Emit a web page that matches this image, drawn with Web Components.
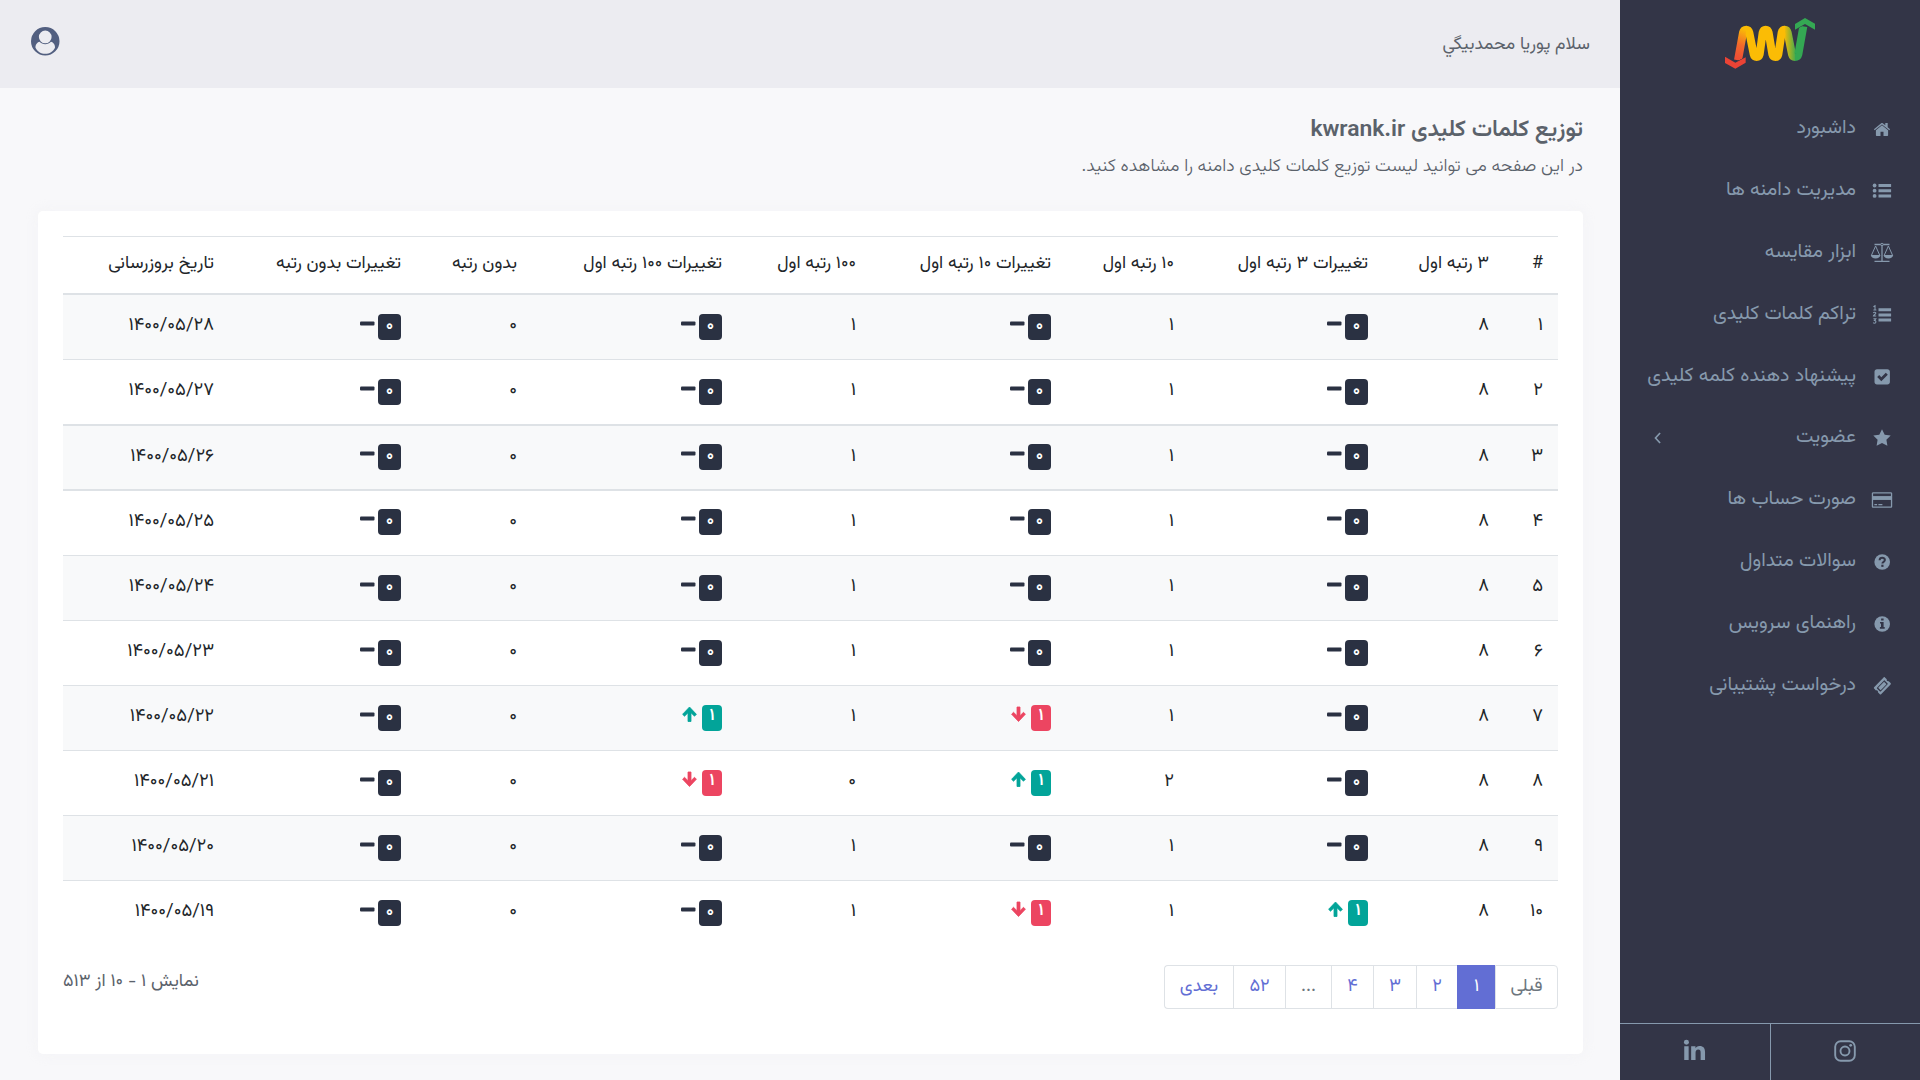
<!DOCTYPE html>
<html lang="fa" dir="rtl">
<head>
  <meta charset="utf-8">
  <title>kwrank.ir</title>
  <style>
    body {
      margin: 0;
      background: #f8f8fa;
      color: #5b626b;
      font-family: Vazirmatn, "Noto Sans Arabic", "DejaVu Sans", sans-serif;
      font-size: 16px;
      overflow: hidden;
    }
  </style>
</head>
<body>
  <rank-app>
    <side-bar slot="sidebar">
      <side-item icon="home">داشبورد</side-item>
      <side-item icon="list">مدیریت دامنه ها</side-item>
      <side-item icon="scale">ابزار مقایسه</side-item>
      <side-item icon="listOl">تراکم کلمات کلیدی</side-item>
      <side-item icon="check">پیشنهاد دهنده کلمه کلیدی</side-item>
      <side-item icon="star" expandable>عضویت</side-item>
      <side-item icon="card">صورت حساب ها</side-item>
      <side-item icon="question">سوالات متداول</side-item>
      <side-item icon="info">راهنمای سرویس</side-item>
      <side-item icon="ticket">درخواست پشتیبانی</side-item>
    </side-bar>
    <top-bar slot="header">سلام پوریا محمدبیگي</top-bar>
    <page-title>
      توزیع کلمات کلیدی kwrank.ir
      <span slot="sub">در این صفحه می توانید لیست توزیع کلمات کلیدی دامنه را مشاهده کنید.</span>
    </page-title>
    <data-card>
      <rank-table></rank-table>
      <table-pager slot="footer">نمایش ۱ - ۱۰ از ۵۱۳</table-pager>
    </data-card>
  </rank-app>

  <script>
    // All icons share one 24x24 box
    const icons = {
      home: '<path d="M12 8.3 5.9 13.3v5c0 .4.3.7.7.7h3.9v-4.2h3V19h3.9c.4 0 .7-.3.7-.7v-5z"/><path d="m20.1 12.3-2.4-2V5.9h-2.4V8.3l-2.5-2.1c-.5-.4-1.1-.4-1.6 0l-7.3 6.1.8 1L12 7.4l7.3 5.9z"/>',
      list: '<path d="M8.5 5h12.6v3H8.5zm0 5.2h12.6v3H8.5zm0 5.2h12.6v3H8.5z"/><circle cx="4.6" cy="6.5" r="1.9"/><circle cx="4.6" cy="11.7" r="1.9"/><circle cx="4.6" cy="16.9" r="1.9"/>',
      scale: '<g fill="none" stroke="currentColor"><path d="M4.5 3.5h15M12 4v16" stroke-width="1.3"/><path d="M1.4 14.4 5.6 5l4.2 9.4M14.2 14.4 18.4 5l4.2 9.4" stroke-width="1"/><circle cx="12" cy="3.5" r="1.2" fill="#333547"/></g><path d="M.9 14h9.4c-.1 2.2-2 3.5-4.7 3.5S1 16.2.9 14zM13.7 14h9.4c-.1 2.2-2 3.5-4.7 3.5s-4.6-1.3-4.7-3.5zM4.5 19.8h15v1.3h-15z"/>',
      listOl: '<path d="M8.5 5.3h12.6v3H8.5zm0 5.1h12.6v3H8.5zm0 5.1h12.6v3H8.5z"/><path d="M3.4 3.7 5 2.8v4.2M3.4 7h3M3.3 9.9c.6-1.1 2.7-.9 2.5.4-.1.8-2.3 1.7-2.4 2.7h2.8M3.4 15.7h2.4l-1.3 1.7c1.9 0 1.9 2.8 0 2.8-.6 0-1-.1-1.3-.5" fill="none" stroke="currentColor" stroke-width="1.1"/>',
      check: '<path fill-rule="evenodd" d="M7 4.2h10.4c1.4 0 2.5 1.1 2.5 2.5v10.4c0 1.4-1.1 2.5-2.5 2.5H7c-1.4 0-2.5-1.1-2.5-2.5V6.7c0-1.4 1.1-2.5 2.5-2.5zm4.3 12 6.5-6.5-2-2-4.5 4.5-2.1-2.1-2 2z"/>',
      star: '<path d="m12 3.3 2.7 5.4 6 .9-4.3 4.2 1 6-5.4-2.9-5.4 2.9 1-6-4.3-4.2 6-.9z"/>',
      card: '<path fill-rule="evenodd" d="M3.2 4.2h17.6c.8 0 1.4.6 1.4 1.4v12.8c0 .8-.6 1.4-1.4 1.4H3.2c-.8 0-1.4-.6-1.4-1.4V5.6c0-.8.6-1.4 1.4-1.4zm-.1 1.3v2.8h17.8V5.5zm0 6.3v6.7h17.8v-6.7zM4.4 15.9h2.7v1.3H4.4zm4 0h4v1.3h-4z"/><path d="M2.5 8.3h19v3.5h-19z"/>',
      question: '<circle cx="12.2" cy="12" r="7.8"/><path d="M9.6 10.2c.1-3.2 5.3-3.1 5.3-.2 0 1.8-2.5 1.8-2.5 3.5" fill="none" stroke="#333547" stroke-width="2"/><path fill="#333547" d="M11.3 14.7h2.2v2.2h-2.2z"/>',
      info: '<circle cx="12.2" cy="12" r="7.8"/><path fill="#333547" d="M11.1 6.5h2.5v2.1h-2.5zM10 9.9h3.6v5.2h1.1v1.7H9.9v-1.7H11v-3.5h-1z"/>',
      ticket: '<path fill-rule="evenodd" d="m14.9 3.4 1.9 1.9c-.5 1.2.7 2.4 1.9 1.9l1.9 1.9c.4.4.4.9 0 1.3l-9.5 9.8c-.4.4-.9.4-1.3 0l-1.9-1.9c.5-1.2-.7-2.4-1.9-1.9l-1.9-1.9c-.4-.4-.4-.9 0-1.3L13.6 3.4c.4-.4.9-.4 1.3 0zm-.9 3.1-7 7.2c-.2.2-.2.5 0 .7l3 3c.2.2.5.2.7 0l6.9-7.1c.2-.2.2-.5 0-.7l-3-3.1c-.2-.2-.4-.2-.6 0zm.3 1.5 2 2c.2.2.2.3 0 .5l-5.4 5.6c-.2.2-.4.2-.5 0l-2-2c-.2-.2-.2-.4 0-.5L13.8 8c.1-.2.4-.2.5 0z"/>',
      left: '<path d="m14.5 6-5.5 6 5.5 6" fill="none" stroke="currentColor" stroke-width="2"/>',
      linkedin: '<path d="M1.3 7.6h4.6V22H1.3zM8.5 7.6H13v2c.6-1 2-2.3 4.3-2.3 4 0 5.7 2.3 5.7 6.4V22h-4.6v-7.7c0-2-.6-3.3-2.5-3.3-2 0-2.8 1.5-2.8 3.3V22H8.5z"/><circle cx="3.6" cy="3.4" r="2.6"/>',
      instagram: '<g fill="none" stroke="currentColor" stroke-width="1.9"><rect x="2.2" y="2.2" width="19.6" height="19.6" rx="5.5"/><circle cx="12" cy="12" r="4.5"/></g><circle cx="17.7" cy="6.3" r="1.4"/>',
      user: '<path fill-rule="evenodd" d="M12 0a12 12 0 1 1 0 24 12 12 0 0 1 0-24zm0 3a5.3 5.3 0 1 0 0 10.7A5.3 5.3 0 0 0 12 3zM7.2 12.5C5 12.8 3.6 15.4 3.8 17.5 5.2 20.7 8.4 22.6 12 22.6s6.8-1.9 8.2-5.1c.2-2.1-1.2-4.7-3.4-5-1.2 1.3-2.9 2-4.8 2s-3.6-.7-4.8-2z"/>'
    };

    function svg(name, size) {
      return `<svg width="${size}" height="${size}" viewBox="0 0 24 24" fill="currentColor">${icons[name]}</svg>`;
    }

    function define(name, render) {
      customElements.define(name, class extends HTMLElement {
        connectedCallback() {
          if (this.shadowRoot) return;
          this.attachShadow({ mode: 'open' }).innerHTML = render(this);
        }
      });
    }

    define('rank-app', () => `
      <style>
        :host { display: flex; height: 1080px; }
        .main { flex: 1; min-width: 0; }
        .content { padding: 26px 37px 0 38px; }
      </style>
      <slot name="sidebar"></slot>
      <div class="main">
        <slot name="header"></slot>
        <div class="content"><slot></slot></div>
      </div>
    `);

    define('brand-logo', () => `
      <style>
        :host { display: block; height: 97px; padding-top: 17px; box-sizing: border-box; text-align: center; }
        svg { display: inline-block; }
      </style>
      <svg width="92" height="52" viewBox="312 50 276 156">
        <defs>
          <linearGradient id="fall" gradientUnits="userSpaceOnUse" x1="350" y1="170" x2="382" y2="90">
            <stop offset="0" stop-color="#ee4f35"/>
            <stop offset=".45" stop-color="#f26a2b"/>
            <stop offset="1" stop-color="#fbbc05"/>
          </linearGradient>
          <linearGradient id="rise" gradientUnits="userSpaceOnUse" x1="492" y1="0" x2="530" y2="0">
            <stop offset="0" stop-color="#fbbc05"/>
            <stop offset="1" stop-color="#34a853"/>
          </linearGradient>
        </defs>
        <g fill="none" stroke-width="24" stroke-linejoin="round">
          <path stroke="url(#fall)" d="M354 180 369 97Q371 88 379 88"/>
          <path stroke="url(#rise)" d="M494 88Q501 88 503 97L516 162Q518 170 525 170"/>
          <path stroke="#34a853" d="M525 170Q533 170 535 162L550 78"/>
          <path stroke="#fbbc05" d="M378 88Q386 88 388 97L401 162Q403 170 410 170T419 162L428 97Q430 88 437 88T446 97L457 162Q459 170 466 170T475 162L485 97Q487 88 495 88"/>
        </g>
        <path fill="#ea4335" stroke="#333547" stroke-width="3" paint-order="stroke" d="m315 169 31 18 31-16v16l-31 18-31-17z"/>
        <path fill="#34a853" stroke="#333547" stroke-width="3" paint-order="stroke" d="m525 71 30-18 30 17v18l-30-17-30 17z"/>
      </svg>
    `);

    define('side-bar', () => `
      <style>
        :host { display: flex; flex-direction: column; width: 300px; height: 1080px; background: #333547; color: #8699ad; }
        nav { flex: 1; }
        footer { display: flex; height: 56px; border-top: 1px solid #8699ad; }
        footer a { flex: 1; display: flex; justify-content: center; padding-top: 15px; }
        footer a + a { border-right: 1px solid #8699ad; }
      </style>
      <brand-logo></brand-logo>
      <nav><slot></slot></nav>
      <footer>
        <a>${svg('instagram', 24)}</a>
        <a>${svg('linkedin', 23)}</a>
      </footer>
    `);

    define('side-item', (el) => `
      <style>
        :host { display: flex; align-items: center; height: 61.9px; padding: 0 26px 0 28px; font-size: 19.6px; line-height: 30px; white-space: nowrap; }
        span { flex: 1; min-width: 0; margin-right: 14px; padding-top: 2px; }
        svg { display: block; flex: none; margin-top: 2px; }
      </style>
      ${svg(el.getAttribute('icon'), 24)}
      <span><slot></slot></span>
      ${el.hasAttribute('expandable') ? svg('left', 20) : ''}
    `);

    define('top-bar', () => `
      <style>
        :host { display: flex; justify-content: space-between; height: 88px; padding: 0 30px 0 31px; background: #ececf1; box-sizing: border-box; font-size: 17.6px; line-height: 28px; }
        span { padding-top: 31px; }
        svg { margin-top: 27px; color: #525f80; }
      </style>
      <span><slot></slot></span>
      ${svg('user', 28.5)}
    `);

    define('page-title', () => `
      <style>
        :host { display: block; height: 97px; }
        h4 { margin: 0; padding-top: 2px; font-size: 22.9px; line-height: 30px; font-weight: 600; }
        p { margin: 7px 0 0; font-size: 17.75px; line-height: 28px; font-weight: 300; }
      </style>
      <h4><slot></slot></h4>
      <p><slot name="sub"></slot></p>
    `);

    define('data-card', () => `
      <style>
        :host { display: flex; flex-direction: column; height: 843px; padding: 25px 25px 45px; box-sizing: border-box; background: #fff; border-radius: 5px; box-shadow: 0 0 13px rgba(236, 236, 241, .44); }
        div { margin-top: auto; }
      </style>
      <slot></slot>
      <div><slot name="footer"></slot></div>
    `);

    define('change-badge', (el) => {
      const trend = el.getAttribute('trend');
      const shapes = {
        flat: '<rect x="0" y="6.5" width="14.5" height="4" rx="1"/>',
        down: '<path d="M6 1h3v8.7l3.5-3.4 1.9 1.9L7.5 15.5.6 8.2l1.9-1.9L6 9.7z" stroke="currentColor" stroke-width=".8" stroke-linejoin="round"/>',
        up: '<path d="M6 15.5h3V6.8l3.5 3.4 1.9-1.9L7.5 1 .6 8.3l1.900 1.900L6 6.800z" stroke="currentColor" stroke-width=".8" stroke-linejoin="round"/>'
      };
      return `
      <style>
        :host { display: flex; align-items: flex-start; gap: 3px; color: #2a3142; }
        :host([trend="up"]) { gap: 5px; color: #02a499; }
        :host([trend="down"]) { gap: 5px; color: #ec4561; }
        b { box-sizing: border-box; width: 23px; height: 26px; border-radius: 4px; background: currentColor; text-align: center; }
        :host(:not([trend="flat"])) b { width: 20px; }
        i { color: #fff; font-size: 17px; font-style: normal; font-weight: 600; line-height: 23px; display: block; }
        :host([trend="flat"]) i { line-height: 24px; }
        svg { margin-top: 1px; }
      </style>
      <b><i><slot></slot></i></b>
      <svg width="15" height="16" viewBox="0 0 15 16" fill="currentColor">${shapes[trend]}</svg>
    `;
    });

    const headers = ['#', '۳ رتبه اول', 'تغییرات ۳ رتبه اول', '۱۰ رتبه اول', 'تغییرات ۱۰ رتبه اول', '۱۰۰ رتبه اول', 'تغییرات ۱۰۰ رتبه اول', 'بدون رتبه', 'تغییرات بدون رتبه', 'تاریخ بروزرسانی'];
    const widths = [54, 121, 194, 123, 195, 134, 205, 116, 187, 166];
    const flat = ['flat', '۰'];
    const up = ['up', '۱'];
    const down = ['down', '۱'];
    const rows = [
      ['۱', '۸', flat, '۱', flat, '۱', flat, '۰', flat, '۱۴۰۰/۰۵/۲۸'],
      ['۲', '۸', flat, '۱', flat, '۱', flat, '۰', flat, '۱۴۰۰/۰۵/۲۷'],
      ['۳', '۸', flat, '۱', flat, '۱', flat, '۰', flat, '۱۴۰۰/۰۵/۲۶'],
      ['۴', '۸', flat, '۱', flat, '۱', flat, '۰', flat, '۱۴۰۰/۰۵/۲۵'],
      ['۵', '۸', flat, '۱', flat, '۱', flat, '۰', flat, '۱۴۰۰/۰۵/۲۴'],
      ['۶', '۸', flat, '۱', flat, '۱', flat, '۰', flat, '۱۴۰۰/۰۵/۲۳'],
      ['۷', '۸', flat, '۱', down, '۱', up, '۰', flat, '۱۴۰۰/۰۵/۲۲'],
      ['۸', '۸', flat, '۲', up, '۰', down, '۰', flat, '۱۴۰۰/۰۵/۲۱'],
      ['۹', '۸', flat, '۱', flat, '۱', flat, '۰', flat, '۱۴۰۰/۰۵/۲۰'],
      ['۱۰', '۸', up, '۱', down, '۱', flat, '۰', flat, '۱۴۰۰/۰۵/۱۹']
    ];

    function cell(value) {
      if (Array.isArray(value)) {
        return `<td class="change"><change-badge trend="${value[0]}">${value[1]}</change-badge></td>`;
      }
      return `<td>${value}</td>`;
    }

    define('rank-table', () => `
      <style>
        :host { display: block; color: #212529; }
        table { width: 1495px; table-layout: fixed; border-collapse: separate; border-spacing: 0; font-size: 17.8px; }
        th, td { box-sizing: border-box; text-align: right; vertical-align: top; white-space: nowrap; padding: 17px 15px 0; line-height: 28px; font-weight: 400; }
        th { height: 59px; padding-top: 13px; border-top: 1px solid #dee2e6; border-bottom: 2px solid #dee2e6; }
        td { height: 65px; border-bottom: 1px solid #dee2e6; font-size: 18.4px; }
        td.change { padding-top: 19px; }
        td:last-child { letter-spacing: 1.1px; }
        tr:nth-child(2) td { height: 66px; border-bottom-width: 2px; }
        tr:nth-child(3) td { border-bottom-width: 2px; }
        tr:nth-child(3) td.change, tr:nth-child(4) td.change { padding-top: 18px; }
        tbody tr:nth-child(odd) { background: #f8f9fa; }
        tbody tr:last-child td { border-bottom: 0; }
      </style>
      <table>
        <colgroup>${widths.map((w) => `<col style="width: ${w}px">`).join('')}</colgroup>
        <thead><tr>${headers.map((h) => `<th>${h}</th>`).join('')}</tr></thead>
        <tbody>${rows.map((r) => `<tr>${r.map(cell).join('')}</tr>`).join('')}</tbody>
      </table>
    `);

    const pages = [['قبلی', 63, 'off'], ['۱', 38, 'active'], ['۲', 41], ['۳', 43], ['۴', 42], ['...', 46, 'dots'], ['۵۲', 52], ['بعدی', 69]];

    define('table-pager', () => `
      <style>
        :host { display: flex; justify-content: space-between; align-items: flex-start; }
        .pages { display: flex; font-size: 18.2px; line-height: 42px; color: #626ed4; }
        .pages a { box-sizing: border-box; height: 44px; text-align: center; border: 1px solid #dee2e6; border-right-width: 0; }
        .pages a:first-child { border-right-width: 1px; border-radius: 0 4px 4px 0; }
        .pages a:last-child { border-radius: 4px 0 0 4px; }
        .pages a.off, .pages a.dots { color: #6c757d; }
        .pages a.active { background: #626ed4; border-color: #626ed4; color: #fff; }
        .info { padding-top: 3px; font-size: 17.9px; line-height: 28px; }
      </style>
      <div class="pages">${pages.map(([text, w, cls = '']) => `<a class="${cls}" style="width: ${w}px">${text}</a>`).join('')}</div>
      <div class="info"><slot></slot></div>
    `);
  </script>
</body>
</html>
